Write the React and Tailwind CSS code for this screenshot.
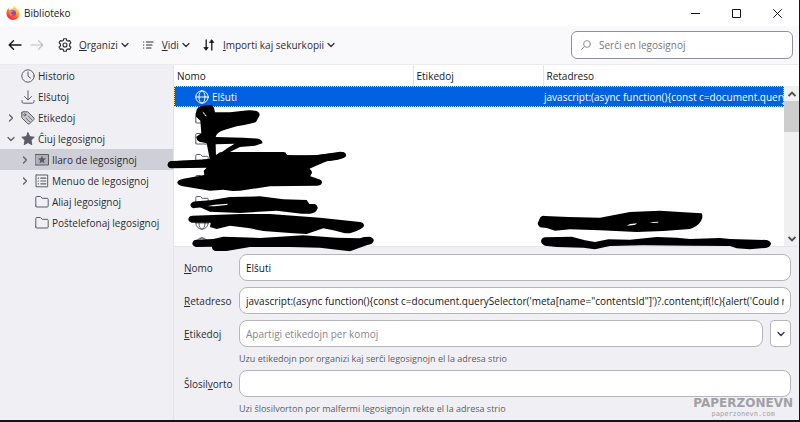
import { useState } from "react";

const FirefoxLogo = () => (
  <svg className="w-[14px] h-[14px]" viewBox="0 0 28 28" aria-hidden="true">
    <defs>
      <linearGradient id="flame" x1="0.85" y1="0.05" x2="0.25" y2="1">
        <stop offset="0" stopColor="#fff14a" />
        <stop offset="0.35" stopColor="#ffb02a" />
        <stop offset="0.65" stopColor="#ff5a36" />
        <stop offset="1" stopColor="#ec1c64" />
      </linearGradient>
      <linearGradient id="globe" x1="0.5" y1="0" x2="0.5" y2="1">
        <stop offset="0" stopColor="#a84bf0" />
        <stop offset="1" stopColor="#5a3fd0" />
      </linearGradient>
    </defs>
    <path
      fill="url(#flame)"
      d="M17 0c1 3 3 4 5 6 3 2 5 6 5 10 0 6-6 12-13 12S1 22 1 15c0-4 1-8 4-11l1 4 4-1c1-1 1-2 3-3l1 3c1-2 1-5 3-7z"
    />
    <circle cx="14" cy="14" r="6" fill="url(#globe)" />
    <path fill="#ff8a2a" d="M6 10c3-2 6-1 8 1-1 2-4 1-4 3 0 3 4 4 7 2-1 4-9 5-11-1-1-2-1-4 0-5z" />
  </svg>
);

const Chevron = ({ className = "" }) => (
  <svg
    className={`w-2 h-2 shrink-0 ${className}`}
    viewBox="0 0 8 8"
    fill="none"
    stroke="currentColor"
    strokeWidth="1.2"
    strokeLinecap="round"
    strokeLinejoin="round"
    aria-hidden="true"
  >
    <path d="M1 2.5 4 5.5 7 2.5" />
  </svg>
);

const ScrollArrow = ({ className = "" }) => (
  <svg
    className={`w-2 h-2 shrink-0 ${className}`}
    viewBox="0 0 8 8"
    fill="none"
    stroke="currentColor"
    strokeWidth="1.8"
    aria-hidden="true"
  >
    <path d="M.6 2 4 5.400 7.400 2" />
  </svg>
);

const Icon = ({ children, className = "" }) => (
  <svg
    className={`w-[14px] h-[14px] shrink-0 ${className}`}
    viewBox="0 0 14 14"
    fill="none"
    stroke="currentColor"
    strokeLinecap="round"
    strokeLinejoin="round"
    aria-hidden="true"
  >
    {children}
  </svg>
);

const ClockIcon = () => (
  <Icon>
    <circle cx="7" cy="7" r="6.2" />
    <path d="M7 3v4.2L9.5 9" />
  </Icon>
);

const DownloadIcon = () => (
  <Icon>
    <path d="M7 .8v9M3.5 6.5 7 10l3.5-3.5M1 10.5v1.3c0 .8.6 1.4 1.4 1.4h9.2c.8 0 1.4-.6 1.4-1.4v-1.3" />
  </Icon>
);

const TagIcon = () => (
  <Icon>
    <path
      fill="#c9c9cf"
      d="M.8 1.8v4.4c0 .4.1.7.4 1l5.6 5.6c.5.5 1.3.5 1.8 0l4.2-4.2c.5-.5.5-1.3 0-1.8L7.2 1.2c-.3-.3-.6-.4-1-.4H1.8c-.6 0-1 .4-1 1z"
    />
    <circle cx="3.8" cy="3.8" r="1" fill="#f0f0f4" />
    <path strokeWidth="0.8" d="M5 7.2 9 11M7.2 5 11 9" />
  </Icon>
);

const StarIcon = () => (
  <Icon>
    <path
      fill="currentColor"
      d="m7 .8 1.800 3.900 4.400.5-3.200 3 .8 4.500L7 10.500l-3.800 2.200.8-4.500-3.200-3 4.400-.5z"
    />
  </Icon>
);

const ToolbarFolderIcon = () => (
  <Icon>
    <path fill="#b1b1b9" d="M.5 1.500h13v10.500H.5z" />
    <path
      stroke="none"
      fill="currentColor"
      d="m7 2.800 1.200 2.500 2.800.3-2.100 1.900.6 2.800L7 8.900l-2.500 1.400.6-2.800L3 5.600l2.800-.3z"
    />
  </Icon>
);

const MenuFolderIcon = () => (
  <Icon>
    <path d="M2.5 1h10.2v11.8H1V1z" />
    <path strokeWidth="1.2" d="M3.2 4.2h.3M3.2 7h.3M3.2 9.8h.3M5.8 4.2h5M5.8 7h5M5.8 9.8h5" />
  </Icon>
);

const FolderIcon = () => (
  <Icon>
    <path d="M.8 11V2.500c0-.6.4-1 1-1h3.400c.3 0 .6.100.8.400l1.200 1.400h5c.6 0 1 .4 1 1V11c0 .6-.4 1-1 1H1.800c-.6 0-1-.4-1-1z" />
  </Icon>
);

const GlobeIcon = () => (
  <Icon>
    <circle cx="7" cy="7" r="6.2" />
    <ellipse cx="7" cy="7" rx="3" ry="6.2" />
    <path d="M1 7h12" />
  </Icon>
);

const GearIcon = () => (
  <Icon className="text-[#2b2a33]">
    <path
      strokeWidth="1.1"
      d="M5.700.7h2.600l.4 1.700 1.200.7 1.700-.5 1.300 2.200L11.600 6v2l1.300 1.200-1.300 2.200-1.700-.5-1.200.7-.4 1.700H5.700l-.4-1.700-1.200-.7-1.700.5-1.300-2.200L2.400 8V6L1.100 4.800l1.300-2.200 1.700.5 1.200-.7z"
    />
    <circle cx="7" cy="7" r="2" strokeWidth="1.1" />
  </Icon>
);

const ListIcon = () => (
  <Icon className="text-[#2b2a33]">
    <path strokeWidth="1.2" d="M2.500 4h.2M2.500 7h.2M2.500 10h.2M5.500 4H12M5.500 7H11M5.500 10H10" />
  </Icon>
);

const SortIcon = () => (
  <Icon className="text-[#15141a]">
    <path strokeWidth="1.3" d="M4.200 2v9.500M9.800 12V2.500" />
    <path fill="currentColor" strokeWidth="0.8" d="M2.200 9.500h4L4.200 12zM7.800 4.500h4l-2-2.500z" />
  </Icon>
);

// Redaction strokes drawn over the private bookmarks
const Scribbles = () => (
  <svg
    className="absolute left-0 top-0 w-[626px] h-[200px] overflow-visible pointer-events-none"
    viewBox="174 65 626 200"
    fill="#000"
    fillRule="evenodd"
    aria-hidden="true"
  >
    <path
      transform="translate(160 80) scale(.3333)"
      d="M108 98Q110 80 124 78L148 75Q160 74 162 85L165 97 210 97 265 91Q300 90 299 106L288 126Q280 130 230 139L190 151Q170 158 167 171L250 173 295 176Q310 182 307 190L285 197 240 201 210 216 370 216 380 225 460 227 540 215Q558 215 558 228 554 238 500 244L460 261 430 275H132L140 263 36 265Q23 264 23 254 24 243 36 243L120 241 149 236 140 190 118 185Q108 178 109 170L124 160 121 122 108 110ZM167 193 224 191 204 203 168 229ZM127 94 138 104 140 110 132 104Z"
    />
    <g transform="translate(160 150) scale(.3333)">
      <path d="M23 45Q25 34 36 34L150 27 180 7 376 7 382 17 470 15 545 7Q558 6 558 17 555 27 480 36L440 54Q456 58 456 68L451 79 475 87Q487 90 486 98 484 107 470 107L330 109 240 122 218 123 190 119 150 122 65 108Q52 105 52 97 53 90 70 86L133 75 131 62 145 50 35 54Q23 53 23 45Z" />
      <path d="M91 165Q94 154 110 154L150 151 210 141 300 139 370 148 440 150 448 162 465 162Q476 168 472 178 465 191 450 191L425 191 350 182 240 189 150 185 120 172 100 175Q91 172 91 165ZM140 169 165 164 205 161 200 165 165 169Z" />
      <path d="M85 207Q87 197 98 197L240 192 330 192 480 203 600 216Q613 218 612 228 610 237 570 250L555 250 520 241 490 235 440 252 400 250 310 243 270 235 210 227 170 237 150 231 152 218 95 218Q85 215 85 207Z" />
      <path d="M97 280Q98 270 110 269L160 267 190 260 300 264 430 256 530 263 600 265 612 261 630 260Q643 265 641 273 638 283 622 285L570 304 480 293 390 291 270 291 200 303 165 303Q154 298 156 290L108 291Q97 288 97 280Z" />
    </g>
    <g transform="translate(530 180) scale(.3333)">
      <path d="M23 130 31 112Q37 105 45 108L115 111 210 113 300 96 390 92 450 96 515 100Q523 112 507 131 490 147 470 148L400 153 320 156 210 151 120 148 75 152 50 144 30 142Q23 136 23 130ZM290 137 300 132 322 130 314 135ZM358 129 370 126 386 125 384 128Z" />
      <path d="M33 184Q34 173 45 172L125 170 165 181 195 186 235 178 300 179 380 171 440 173 480 177 570 174 600 177 710 180Q723 183 723 192 720 203 706 204L660 208 620 205 600 198 480 197 340 196 240 198 195 208 160 203 80 201 45 197Q34 193 33 184Z" />
    </g>
  </svg>
);

const places = [
  { label: "Historio", icon: ClockIcon },
  { label: "Elŝutoj", icon: DownloadIcon },
  { label: "Etikedoj", icon: TagIcon, state: "closed" },
  { label: "Ĉiuj legosignoj", icon: StarIcon, state: "open" },
  { label: "Ilaro de legosignoj", icon: ToolbarFolderIcon, state: "closed", child: true, selected: true },
  { label: "Menuo de legosignoj", icon: MenuFolderIcon, state: "closed", child: true },
  { label: "Aliaj legosignoj", icon: FolderIcon, child: true },
  { label: "Poŝtelefonaj legosignoj", icon: FolderIcon, child: true },
];

const hiddenRows = [FolderIcon, FolderIcon, FolderIcon, FolderIcon, FolderIcon, GlobeIcon, GlobeIcon];

const bookmarkUrl =
  "javascript:(async function(){const c=document.querySelector('meta[name=\"contentsId\"]')?.content;if(!c){alert('Could not find contentsId');return;}})()";

const inputClass =
  "block min-w-0 flex-1 h-[27px] px-1.5 bg-white border border-[#b5b5bb] rounded-lg text-[#15141a] placeholder:text-[#85858c] outline-none";

const App = () => {
  const [name, setName] = useState("Elŝuti");
  const [url, setUrl] = useState(bookmarkUrl);

  return (
    <div className="relative flex flex-col min-h-screen overflow-hidden bg-[#f0f0f4] border-r border-b-2 border-[#15141a] font-['Open_Sans','Noto_Sans',sans-serif] text-[10px] leading-4 text-[#2b2a33]">
      <header className="flex items-center h-[26px] pl-1.5 pr-px bg-white">
        <FirefoxLogo />
        <h1 className="ml-1 flex-1 text-[#15141a]">Biblioteko</h1>
        <div className="flex text-[#15141a]">
          <button type="button" aria-label="Minimize" className="w-[41px] h-[26px] flex items-center justify-center">
            <svg className="w-[9px] h-[9px]" viewBox="0 0 9 9" stroke="currentColor">
              <path d="M0 4.5h9" />
            </svg>
          </button>
          <button type="button" aria-label="Maximize" className="w-[41px] h-[26px] flex items-center justify-center">
            <svg className="w-[9px] h-[9px]" viewBox="0 0 9 9" fill="none" stroke="currentColor">
              <path d="M.5.5h8v8h-8z" />
            </svg>
          </button>
          <button type="button" aria-label="Close" className="w-[41px] h-[26px] flex items-center justify-center">
            <svg className="w-[9px] h-[9px]" viewBox="0 0 9 9" stroke="currentColor">
              <path d="m.3.3 8.4 8.4M8.7.3.3 8.7" />
            </svg>
          </button>
        </div>
      </header>

      <div className="flex items-center h-[39px] pl-2 pr-1.5 bg-[#f9f9fb] border-b border-[#ebebef]">
        <button type="button" aria-label="Back" className="text-[#15141a]">
          <Icon>
            <path strokeWidth="1.4" d="M13 7H1.200M5.500 2.700 1.200 7l4.300 4.300" />
          </Icon>
        </button>
        <button type="button" aria-label="Forward" disabled className="ml-2 text-[#bfbfc3]">
          <Icon>
            <path strokeWidth="1.2" d="M1 7h11.800M8.500 2.700 12.800 7l-4.300 4.300" />
          </Icon>
        </button>
        <button type="button" className="ml-3.5 flex items-center">
          <GearIcon />
          <span className="ml-[7px] mr-[3px]">
            <u>O</u>rganizi
          </span>
          <Chevron />
        </button>
        <button type="button" className="ml-3 flex items-center">
          <ListIcon />
          <span className="ml-[7px] mr-[3px]">
            <u>V</u>idi
          </span>
          <Chevron />
        </button>
        <button type="button" className="ml-3 flex items-center">
          <SortIcon />
          <span className="ml-[7px] mr-[3px]">
            <u>I</u>mporti kaj sekurkopii
          </span>
          <Chevron />
        </button>
        <label className="ml-auto flex items-center w-[222px] h-7 pl-[9px] bg-white border border-[#8f8f9d] rounded-md text-[#8f8f9d]">
          <svg
            className="w-[10px] h-[10px] shrink-0"
            viewBox="0 0 10 10"
            fill="none"
            stroke="currentColor"
            strokeLinecap="round"
            aria-hidden="true"
          >
            <circle cx="6" cy="4" r="3.4" />
            <path d="M3.500 6.500.6 9.400" />
          </svg>
          <input
            type="search"
            aria-label="Serĉi en legosignoj"
            placeholder="Serĉi en legosignoj"
            className="ml-2 min-w-0 flex-1 bg-transparent placeholder:text-[#75757b] outline-none"
          />
        </label>
      </div>

      <div className="flex flex-1">
        <nav className="w-[174px] shrink-0 border-r border-[#e3e3e8]">
          <ul>
            {places.map(({ label, icon: PlaceIcon, state, child, selected }) => (
              <li
                key={label}
                className={`flex items-center h-[21px] text-[#5b5b66] ${child ? "pl-[21px]" : "pl-[7px]"} ${
                  selected ? "bg-[#cfcfd8]" : ""
                }`}
              >
                <span className="w-[14px] shrink-0">
                  {state && <Chevron className={state === "closed" ? "-rotate-90" : ""} />}
                </span>
                <PlaceIcon />
                <span className="ml-[3px] whitespace-nowrap text-[#2b2a33]">{label}</span>
              </li>
            ))}
          </ul>
        </nav>

        <main className="relative flex flex-col min-w-0 flex-1">
          <div className="flex h-[182px] overflow-hidden bg-white border-b border-[#e3e3e8]">
            <div className="min-w-0 flex-1 overflow-hidden">
              <table className="w-full table-fixed border-collapse">
                <colgroup>
                  <col className="w-[239px]" />
                  <col className="w-[130px]" />
                  <col />
                </colgroup>
                <thead>
                  <tr className="h-[21px] text-left text-[#15141a]">
                    <th className="p-0 pl-[3px] font-normal border-r border-[#e3e3e8]">Nomo</th>
                    <th className="p-0 pl-[3px] font-normal border-r border-[#e3e3e8]">Etikedoj</th>
                    <th className="p-0 pl-[3px] font-normal">Retadreso</th>
                  </tr>
                </thead>
                <tbody>
                  <tr className="h-[21px] bg-[#0061e0] text-[#fbfbfe] outline-1 outline-dotted outline-[#ffe08a] -outline-offset-1">
                    <td className="p-0 pl-[21px]">
                      <span className="flex items-center gap-[3px]">
                        <GlobeIcon />
                        {name}
                      </span>
                    </td>
                    <td className="p-0" />
                    <td className="p-0 pl-px overflow-hidden whitespace-nowrap">{url}</td>
                  </tr>
                  {hiddenRows.map((RowIcon, i) => (
                    <tr key={i} className="h-[21px] text-[#5b5b66]">
                      <td className="p-0 pl-[21px]">
                        <RowIcon />
                      </td>
                      <td className="p-0" />
                      <td className="p-0" />
                    </tr>
                  ))}
                </tbody>
              </table>
            </div>
            <div className="flex flex-col w-[15px] pt-[21px]">
              <div className="flex flex-col items-center flex-1 pb-[3px] bg-[#f0f0f0] text-[#505050]">
                <span className="flex items-center h-[15px]">
                  <ScrollArrow className="rotate-180" />
                </span>
                <span className="w-full h-[31px] bg-[#cdcdcd]" />
                <ScrollArrow className="mt-auto" />
              </div>
            </div>
          </div>
          <Scribbles />

          <form className="flex flex-col pt-[7px] pl-[10px] pr-2" onSubmit={(e) => e.preventDefault()}>
            <div className="flex items-center">
              <label htmlFor="name" className="w-[55px] shrink-0">
                <u>N</u>omo
              </label>
              <input id="name" type="text" className={inputClass} value={name} onChange={(e) => setName(e.target.value)} />
            </div>
            <div className="flex items-center mt-1.5">
              <label htmlFor="url" className="w-[55px] shrink-0">
                <u>R</u>etadreso
              </label>
              <input id="url" type="text" className={inputClass} value={url} onChange={(e) => setUrl(e.target.value)} />
            </div>
            <div className="flex items-center mt-1.5">
              <label htmlFor="tags" className="w-[55px] shrink-0">
                <u>E</u>tikedoj
              </label>
              <input id="tags" type="text" className={inputClass} placeholder="Apartigi etikedojn per komoj" />
              <button
                type="button"
                aria-label="Montri ĉiujn etikedojn"
                className="ml-[7px] flex items-center justify-center w-[21px] h-[27px] bg-white border border-[#b5b5bb] rounded"
              >
                <Chevron />
              </button>
            </div>
            <p className="mt-1 pl-[55px] text-[9px] text-[#5b5b66]">
              Uzu etikedojn por organizi kaj serĉi legosignojn el la adresa strio
            </p>
            <div className="flex items-center mt-[3px]">
              <label htmlFor="keyword" className="w-[55px] shrink-0">
                Ŝlosil<u>v</u>orto
              </label>
              <input id="keyword" type="text" className={inputClass} />
            </div>
            <p className="mt-1 pl-[55px] text-[9px] text-[#5b5b66]">
              Uzi ŝlosilvorton por malfermi legosignojn rekte el la adresa strio
            </p>
          </form>
        </main>
      </div>

      <div className="absolute right-1.5 bottom-0.5 flex flex-col items-center text-[#a0a0a5]">
        <span className="font-['DejaVu_Sans',sans-serif] text-[12px] leading-[14px] font-bold">PAPERZONEVN</span>
        <span className="font-['DejaVu_Sans_Mono',monospace] text-[7px] leading-2">paperzonevn.com</span>
      </div>
    </div>
  );
};

export default App;
